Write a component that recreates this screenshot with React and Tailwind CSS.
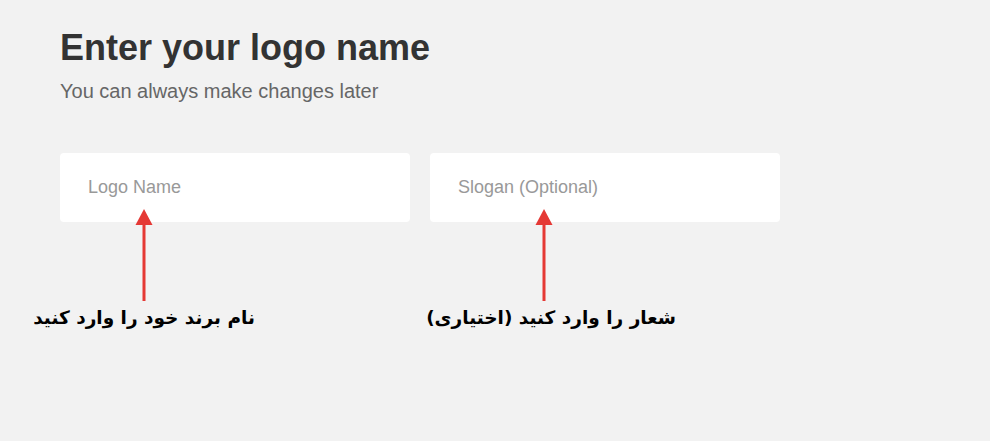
import React from 'react';

function Arrow() {
  return (
    <svg width="18" height="92" viewBox="0 0 18 92" className="block">
      <polygon points="9,0 17.5,16 0.5,16" fill="#e53935" />
      <rect x="7.5" y="14" width="3" height="78" fill="#e53935" />
    </svg>
  );
}

function Field({ placeholder, label, guide, shift }) {
  return (
    <div className="w-[350px] flex flex-col">
      <input
        type="text"
        placeholder={placeholder}
        className="h-[69px] w-full rounded-[4px] bg-white pl-[28px] text-[18px] text-[#333] placeholder:text-[#999] outline-none font-['Liberation_Sans',Arial,sans-serif]"
      />
      <div className={`${guide} flex flex-col items-center -mt-[13px]`}>
        <Arrow />
        <p
          dir="rtl"
          className={`${shift} mt-[2px] whitespace-nowrap text-[18.5px] font-bold leading-[30px] text-black font-['DejaVu_Sans',sans-serif]`}
        >
          {label}
        </p>
      </div>
    </div>
  );
}

export default function App() {
  return (
    <div className="min-h-[441px] w-full bg-[#f2f2f2] pl-[60px] pt-[26px] font-['Liberation_Sans',Arial,sans-serif]">
      <h1 className="text-[36px] font-bold leading-[44px] text-[#333]">Enter your logo name</h1>
      <p className="mt-[9px] text-[20px] leading-[24px] text-[#666]">You can always make changes later</p>

      <div className="mt-[50px] flex gap-[20px]">
        <Field placeholder="Logo Name" label="نام برند خود را وارد کنید" guide="w-[168px]" shift="ml-0" />
        <Field placeholder="Slogan (Optional)" label="شعار را وارد کنید (اختیاری)" guide="w-[228px]" shift="ml-[14px]" />
      </div>
    </div>
  );
}
